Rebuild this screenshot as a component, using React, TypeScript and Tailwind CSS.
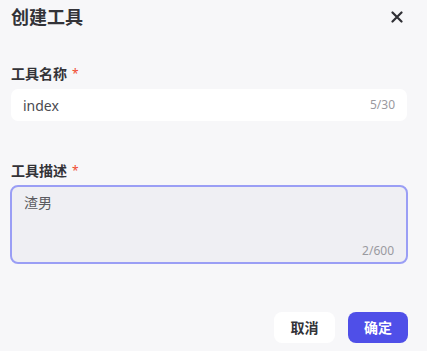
import React from "react";

export default function App() {
  const font = { fontFamily: '"Noto Sans", "Noto Sans CJK SC", sans-serif' };
  return (
    <div className="w-[427px] h-[351px] bg-[#f7f7f9] flex flex-col px-[11px]" style={font}>
      <div className="flex items-center justify-between h-[32px] pt-[1px]">
        <div className="text-[18px] font-bold text-[#333338] leading-none">创建工具</div>
        <svg width="12" height="12" viewBox="0 0 12 12" className="mr-[13px]">
          <path d="M1.5 1.5 L10.5 10.5 M10.5 1.5 L1.5 10.5" stroke="#2f2f35" strokeWidth="2.2" strokeLinecap="round" />
        </svg>
      </div>
      <div className="mt-[34px] flex items-start h-[16px] text-[14px] font-bold text-[#333338] leading-[16px]">
        工具名称<span className="text-[#f0492f] ml-[5px] text-[12px] leading-none mt-[2px] font-normal">*</span>
      </div>
      <div className="mt-[7px] h-[32px] w-[396px] bg-white rounded-[7px] flex items-center justify-between pl-[12px] pr-[12px]">
        <span className="text-[14px] text-[#4a4a50]">index</span>
        <span className="text-[12px] text-[#9a9aa0]">5/30</span>
      </div>
      <div className="mt-[42px] flex items-start h-[16px] text-[14px] font-bold text-[#333338] leading-[16px]">
        工具描述<span className="text-[#f0492f] ml-[5px] text-[12px] leading-none mt-[2px] font-normal">*</span>
      </div>
      <div className="mt-[6px] -ml-[1px] h-[79px] w-[398px] bg-[#efeff3] rounded-[8px] border-2 border-[#9a9ef5] flex flex-col justify-between pl-[12px] pr-[12px] pt-[5px] pb-[2px]">
        <span className="text-[14px] text-[#5a5a60]">渣男</span>
        <span className="text-[12px] text-[#9a9aa0] self-end">2/600</span>
      </div>
      <div className="mt-[48px] flex justify-end gap-[13px] pr-[8px]">
        <button className="w-[61px] h-[31px] bg-white rounded-[8px] text-[14px] font-bold text-[#333338]">取消</button>
        <button className="w-[60px] h-[31px] bg-[#4f4fe8] rounded-[8px] text-[14px] font-bold text-white">确定</button>
      </div>
    </div>
  );
}
